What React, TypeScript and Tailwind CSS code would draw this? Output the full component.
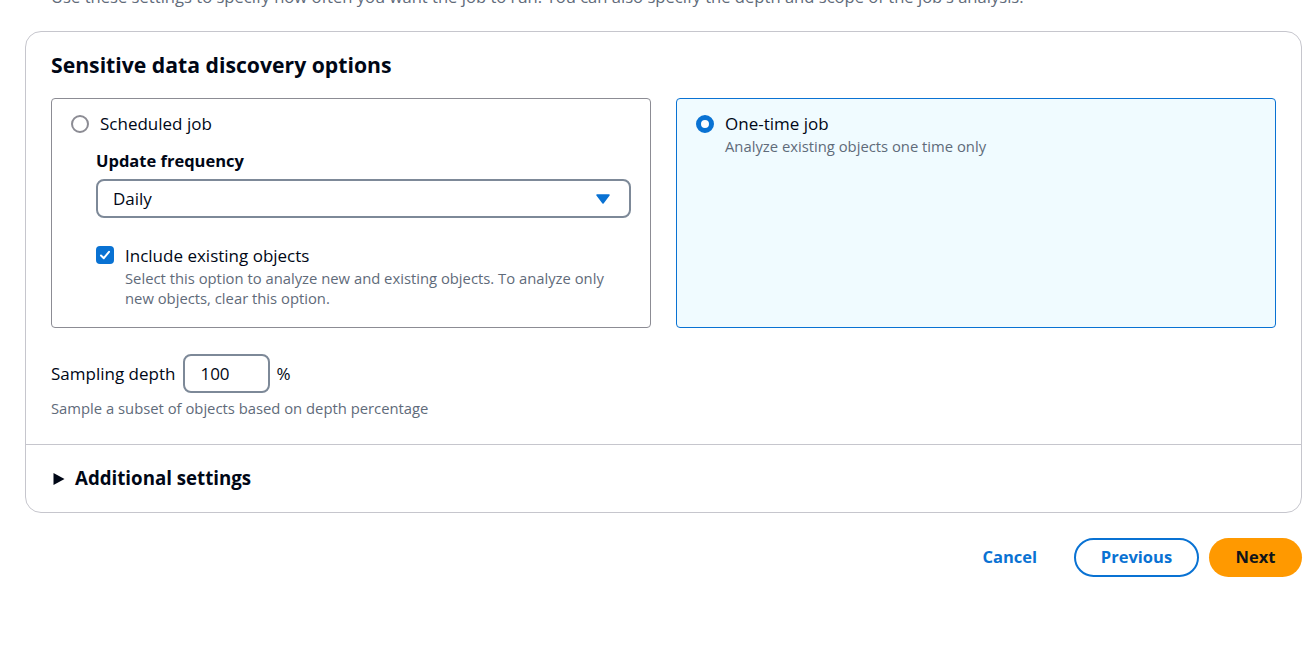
import { useState } from "react";

const font = { fontFamily: '"Open Sans", "Noto Sans", sans-serif' };

export default function App() {
  const [jobType, setJobType] = useState("onetime");
  const [includeExisting, setIncludeExisting] = useState(true);
  const [depth, setDepth] = useState("100");

  return (
    <div className="w-[1309px] h-[657px] bg-white overflow-hidden text-[#000716]" style={font}>
      <div className="pl-[25px] pr-[7px] -mt-[13px]">
        <p className="pl-[26px] text-[16.6px] leading-5 text-[#5f6b7a] whitespace-nowrap">
          Use these settings to specify how often you want the job to run. You can also specify the depth and scope of the job's analysis.
        </p>

        <div className="mt-[24px] border border-[#c6c6cd] rounded-2xl">
          <div className="px-[25px] pt-[19px] pb-[26px]">
            <h2 className="text-[21.2px] font-bold leading-7">Sensitive data discovery options</h2>

            <div className="mt-[19px] grid grid-cols-2 gap-[25px]">
              <div
                className={
                  jobType === "scheduled"
                    ? "h-[230px] border border-[#0972d3] bg-[#f0fbff] rounded-sm px-[19px] pt-[14px]"
                    : "h-[230px] border border-[#8c8c94] rounded-sm px-[19px] pt-[14px]"
                }
              >
                <label className="flex items-center gap-[11px] cursor-pointer" onClick={() => setJobType("scheduled")}>
                  <span
                    className={
                      jobType === "scheduled"
                        ? "w-[18px] h-[18px] rounded-full border-[5px] border-[#0972d3] bg-white"
                        : "w-[18px] h-[18px] rounded-full border-2 border-[#8c8c94] bg-white"
                    }
                  />
                  <span className="text-[17px] leading-[22px]">Scheduled job</span>
                </label>

                <div className="pl-[25px]">
                  <div className="mt-[15px] text-[16.5px] font-bold leading-[22px]">Update frequency</div>
                  <div className="mt-[7px] h-[39px] border-2 border-[#7d8998] rounded-lg flex items-center justify-between pl-[15px] pr-[19px]">
                    <span className="text-[17px]">Daily</span>
                    <svg width="14" height="10" viewBox="0 0 14 10">
                      <path d="M1 1 L13 1 L7 9 Z" fill="#0972d3" stroke="#0972d3" strokeWidth="1.5" strokeLinejoin="round" />
                    </svg>
                  </div>

                  <div className="mt-[27px] flex gap-[11px]">
                    <button
                      className={
                        includeExisting
                          ? "mt-[1px] w-[18px] h-[18px] shrink-0 rounded-[4px] bg-[#0972d3] flex items-center justify-center"
                          : "mt-[1px] w-[18px] h-[18px] shrink-0 rounded-[4px] border-2 border-[#8c8c94] bg-white"
                      }
                      onClick={() => setIncludeExisting(!includeExisting)}
                    >
                      {includeExisting && (
                        <svg width="12" height="12" viewBox="0 0 12 12">
                          <path d="M2 6.5 L4.8 9.2 L10 2.8" fill="none" stroke="white" strokeWidth="2" strokeLinecap="round" strokeLinejoin="round" />
                        </svg>
                      )}
                    </button>
                    <div>
                      <div className="text-[17px] leading-[22px]">Include existing objects</div>
                      <div className="mt-[1px] text-[14.8px] leading-5 text-[#5f6b7a] pr-[20px]">
                        Select this option to analyze new and existing objects. To analyze only new objects, clear this option.
                      </div>
                    </div>
                  </div>
                </div>
              </div>

              <div
                className={
                  jobType === "onetime"
                    ? "h-[230px] border border-[#0972d3] bg-[#f0fbff] rounded-sm px-[19px] pt-[14px]"
                    : "h-[230px] border border-[#8c8c94] rounded-sm px-[19px] pt-[14px]"
                }
              >
                <label className="flex gap-[11px] cursor-pointer" onClick={() => setJobType("onetime")}>
                  <span
                    className={
                      jobType === "onetime"
                        ? "mt-[2px] w-[18px] h-[18px] shrink-0 rounded-full border-[5px] border-[#0972d3] bg-white"
                        : "mt-[2px] w-[18px] h-[18px] shrink-0 rounded-full border-2 border-[#8c8c94] bg-white"
                    }
                  />
                  <span>
                    <span className="block text-[17px] leading-[22px]">One-time job</span>
                    <span className="block mt-[1px] text-[14.8px] leading-5 text-[#5f6b7a]">Analyze existing objects one time only</span>
                  </span>
                </label>
              </div>
            </div>

            <div className="mt-[26px] flex items-center">
              <span className="text-[17px] mr-[8px]">Sampling depth</span>
              <input
                value={depth}
                onChange={(e) => setDepth(e.target.value)}
                className="w-[87px] h-[39px] border-2 border-[#7d8998] rounded-lg px-[15px] text-[17px] outline-none"
                style={font}
              />
              <span className="ml-[6px] text-[17px]">%</span>
            </div>
            <div className="mt-[5px] text-[14.8px] leading-5 text-[#5f6b7a]">Sample a subset of objects based on depth percentage</div>
          </div>

          <div className="border-t border-[#c6c6cd] px-[27px] h-[68px] flex items-center gap-[10px]">
            <svg width="12" height="14" viewBox="0 0 12 14">
              <path d="M0.5 1 L11.5 7 L0.5 13 Z" fill="#000716" />
            </svg>
            <span className="text-[18.7px] font-bold">Additional settings</span>
          </div>
        </div>

        <div className="mt-[25px] flex justify-end items-center gap-[10px]">
          <button className="px-[20px] h-[39px] text-[16.5px] font-bold text-[#0972d3]" style={font}>Cancel</button>
          <button className="ml-[7px] w-[125px] h-[39px] rounded-full border-2 border-[#0972d3] text-[16.5px] font-bold text-[#0972d3]" style={font}>
            Previous
          </button>
          <button className="w-[93px] h-[39px] rounded-full bg-[#ff9900] text-[16.5px] font-bold text-[#0f141a]" style={font}>
            Next
          </button>
        </div>
      </div>
    </div>
  );
}
